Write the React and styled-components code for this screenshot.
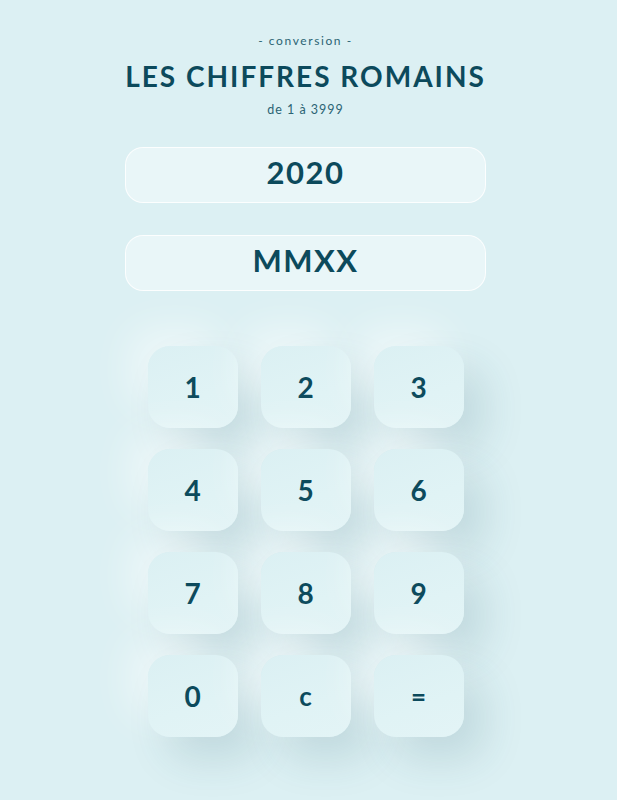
import styled, { createGlobalStyle } from 'styled-components';

const GlobalStyle = createGlobalStyle`
    body{
        margin: 0;
        background-color: #dcf0f3;
        font-family: 'Lato', 'Open Sans', sans-serif;
        color: #0c4a5c;
    }
`

const keys = ['1', '2', '3', '4', '5', '6', '7', '8', '9', '0', 'c', '=']

export default function App() {
    return(
        <Page>
            <GlobalStyle />
            <Header>
                <Kicker>- conversion -</Kicker>
                <Title>LES CHIFFRES ROMAINS</Title>
                <Subtitle>de 1 à 3999</Subtitle>
            </Header>
            <Field>2020</Field>
            <Field>MMXX</Field>
            <Keypad>
                {keys.map((k) => (
                    <Key key={k} small={k === 'c' || k === '='}>{k}</Key>
                ))}
            </Keypad>
        </Page>
    )
}

const Page = styled.div`
    width: 100%;
    min-height: 800px;
    box-sizing: border-box;
    padding-right: 6px;
    padding-top: 33px;
    display: flex;
    flex-direction: column;
    align-items: center;
    background-color: #dcf0f3;
`
const Header = styled.div`
    display: flex;
    flex-direction: column;
    align-items: center;
`
const Kicker = styled.p`
    margin: 0;
    font-size: 12px;
    line-height: 16px;
    letter-spacing: 1.6px;
    color: #2b6473;
`
const Title = styled.h1`
    margin: 10px 0 0 0;
    font-size: 28px;
    line-height: 34px;
    font-weight: 700;
    letter-spacing: 2px;
    color: #0c4a5c;
`
const Subtitle = styled.p`
    margin: 9px 0 0 0;
    font-size: 12.5px;
    line-height: 16px;
    letter-spacing: 1px;
    color: #2b6473;
`
const Field = styled.div`
    width: 361px;
    height: 56px;
    box-sizing: border-box;
    padding-bottom: 6px;
    margin-top: 29px;
    & + & { margin-top: 32px; }
    border-radius: 18px;
    border: 1.5px solid rgba(255, 255, 255, 0.85);
    background-color: #e9f6f8;
    display: flex;
    align-items: center;
    justify-content: center;
    font-size: 31px;
    font-weight: 700;
    letter-spacing: 1.5px;
    color: #0c4a5c;
`
const Keypad = styled.div`
    margin-top: 55px;
    display: grid;
    grid-template-columns: repeat(3, 90px);
    grid-auto-rows: 82px;
    column-gap: 23px;
    row-gap: 21px;
`
const Key = styled.div`
    border-radius: 22px;
    background: linear-gradient(160deg, #dbf0f3 0%, #e0f3f5 60%, #e3f4f6 100%);
    box-shadow: 20px 22px 40px rgba(40, 95, 110, 0.15), -18px -18px 40px rgba(255, 255, 255, 0.5);
    display: flex;
    align-items: center;
    justify-content: center;
    font-size: ${(p) => (p.small ? '26px' : '28px')};
    font-weight: 700;
    color: #0c4a5c;
`
